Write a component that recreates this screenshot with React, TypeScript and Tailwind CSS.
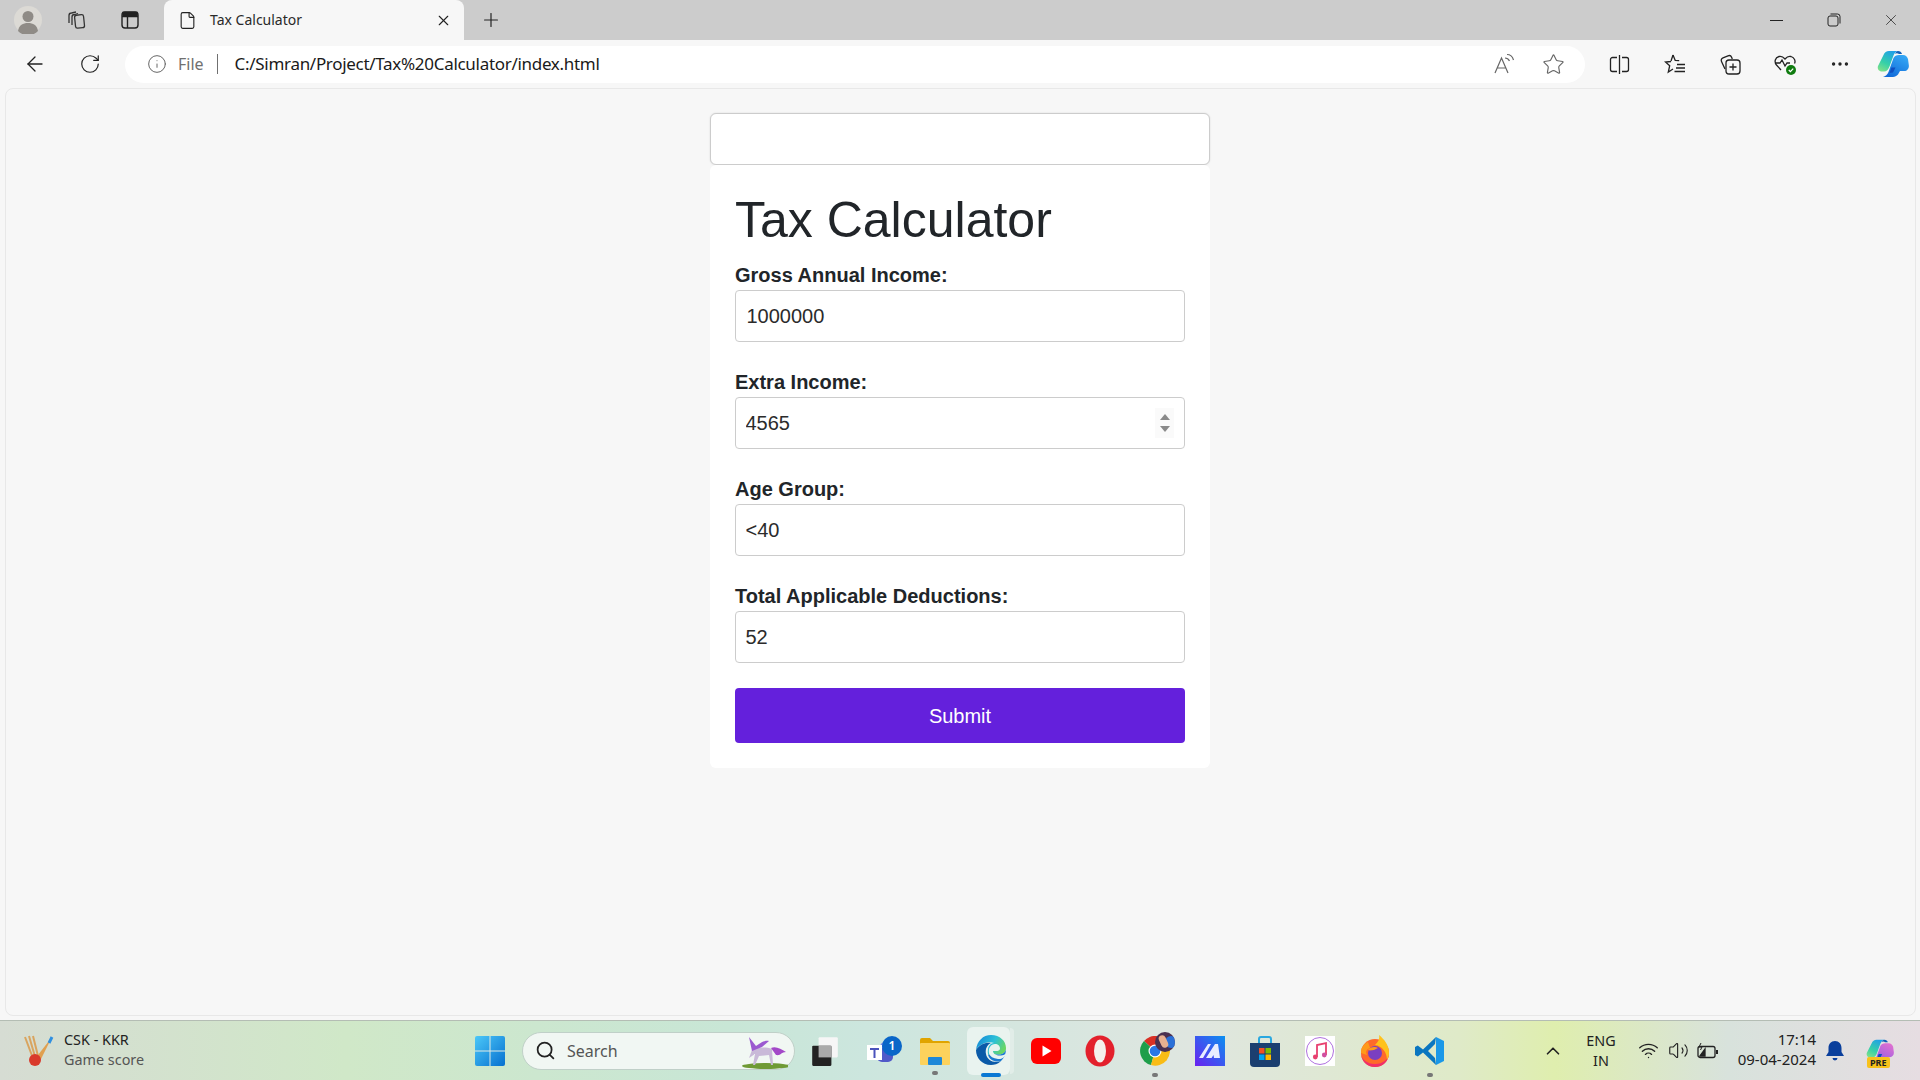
import React from 'react';
import { ArrowLeft, ChevronUp, File, Info, MoreHorizontal, Plus, RotateCw, Search, Star, Volume2, Wifi, X } from 'lucide-react';

const fields = [
  { label: 'Gross Annual Income:', value: '1000000', inset: 'px-[10.500px]' },
  { label: 'Extra Income:', value: '4565', inset: 'px-[9.500px]', spinner: true },
  { label: 'Age Group:', value: '<40', inset: 'px-[9.500px]' },
  { label: 'Total Applicable Deductions:', value: '52', inset: 'px-[9.500px]' },
];

const Slot = ({ w, children, className = '' }: { w: string; children?: React.ReactNode; className?: string }) => (
  <div className={`flex shrink-0 items-center justify-center ${w} ${className}`}>{children}</div>
);

const CopilotMark = ({ id, size = 32, pink = false }: { id: string; size?: number; pink?: boolean }) => (
  <svg width={size} height={size} viewBox="0 0 32 32">
    <defs>
      <linearGradient id={`${id}A`} x1="0.7" y1="0" x2="0.2" y2="1">
        <stop offset="0" stopColor="#1f9fe8" />
        <stop offset="0.6" stopColor="#35d0a8" />
        <stop offset="1" stopColor="#7fe08a" />
      </linearGradient>
      <linearGradient id={`${id}B`} x1="0.8" y1="0" x2="0.2" y2="1">
        <stop offset="0" stopColor={pink ? '#e070d0' : '#35a8f5'} />
        <stop offset="1" stopColor={pink ? '#8a5ce8' : '#1068d8'} />
      </linearGradient>
    </defs>
    <path d="M12 3h9c-2 .5-3.500 2-4.500 4.500l-4 11c-1 3-3 5-5.500 5H5c-3 0-5-2.500-4-5.500L6.500 7C7.500 4.500 9.500 3 12 3z" fill={`url(#${id}A)`} />
    <path d="M21 3c2 0 3.500 1 4 3l-3 0c-1.500-1-3-1-4 0 .5-1.500 1.500-3 3-3z" fill="#125fb8" />
    <path d="M22 7h4c2.500 0 4 1.500 5 4l.8 6c.5 3-1.500 6-4.500 6h-4.300l-2 3.500C19.500 28 18 29 16 29H6c2.500-.5 4.500-2.500 5.500-5l5-14C17.500 8 19.500 7 22 7z" fill={`url(#${id}B)`} />
    <path d="M14.500 19.500h4l-2.500 5-3.500.5z" fill="#0f4fc0" />
  </svg>
);

const Tabbar = () => (
  <div className="flex h-10 items-center bg-[#cccccc] pr-px">
    <Slot w="w-[56px]">
      <svg width="28" height="28" viewBox="0 0 28 28">
        <circle cx="14" cy="14" r="14" fill="#dcdad5" />
        <circle cx="14" cy="10.500" r="5.500" fill="#8f8b86" />
        <path d="M4 25c1-6 5-8 10-8s9 2 10 8a14 14 0 0 1-20 0z" fill="#8f8b86" />
      </svg>
    </Slot>
    <Slot w="w-10">
      <svg width="22" height="22" viewBox="0 0 22 22" fill="none" stroke="#333" strokeWidth="1.300">
        <path d="M4 14V6.500C4 5 5 4 6.500 4L11 3" />
        <path d="M7 16V8c0-1.500 1-2.500 2.500-2.500L13 4.500" />
        <rect x="10" y="6" width="9" height="13" rx="2" transform="rotate(-6 14 12)" />
      </svg>
    </Slot>
    <Slot w="w-[68px]">
      <svg width="20" height="20" viewBox="0 0 20 20" fill="none" stroke="#222" strokeWidth="1.400">
        <rect x="2" y="2" width="16" height="16" rx="3" />
        <path d="M2 6.500h16M7.500 6.500V18" />
        <path d="M3 2.500h14V6H3z" fill="#222" />
      </svg>
    </Slot>
    <div className="flex h-10 w-[300px] shrink-0 items-center rounded-t-lg bg-[#f7f7f7] pl-[14px] pr-[12px]">
      <File size={19} strokeWidth={1.400} className="text-[#222]" />
      <span className="ml-[13px] flex-1 pb-[2px] font-['Noto_Sans',sans-serif] text-[14px] text-[#2a2a2a]">Tax Calculator</span>
      <X size={17} strokeWidth={1.600} className="text-[#222]" />
    </div>
    <Slot w="w-[54px]">
      <Plus size={22} strokeWidth={1.300} className="text-[#222]" />
    </Slot>
    <div className="flex-1" />
    <Slot w="w-[57px]">
      <div className="h-px w-[13px] bg-[#222]" />
    </Slot>
    <Slot w="w-[57px]">
      <svg width="14" height="14" viewBox="0 0 14 14" fill="none" stroke="#222" strokeWidth="1">
        <rect x="1" y="3" width="10" height="10" rx="2" />
        <path d="M3.500 1h7A2.500 2.500 0 0 1 13 3.500v7" />
      </svg>
    </Slot>
    <Slot w="w-[57px]">
      <X size={18} strokeWidth={1} className="text-[#222]" />
    </Slot>
  </div>
);

const Toolbar = () => (
  <div className="flex h-12 items-center bg-[#f7f7f7] pl-[13px]">
    <Slot w="w-[44px]">
      <ArrowLeft size={24} strokeWidth={1.300} className="text-[#222]" />
    </Slot>
    <Slot w="w-[68px]">
      <RotateCw size={22} strokeWidth={1.300} className="mr-[2px] mb-[1px] text-[#222]" />
    </Slot>
    <div className="flex h-[37px] w-[1460px] shrink-0 items-center rounded-full bg-white pl-[22px] pr-[20px] font-['Noto_Sans',sans-serif]">
      <Info size={20} strokeWidth={1.200} className="text-[#666]" />
      <span className="ml-[11px] text-[16px] text-[#707070]">File</span>
      <div className="ml-[13px] h-5 w-px bg-[#707070]" />
      <span className="ml-[17px] text-[17px] tracking-[-0.3px] text-[#1a1a1a]">C:/Simran/Project/Tax%20Calculator/index.html</span>
      <div className="flex-1" />
      <svg width="24" height="22" viewBox="0 0 24 22" fill="none" stroke="#666" strokeWidth="1.200">
        <path d="M2 20 8.500 5 15 20M4.500 15h8" />
        <path d="M12 5c2 0 3.500 1 4.500 3M14 1.500c3 0 5.500 2 6.500 5.500" />
      </svg>
      <Star size={23} strokeWidth={1.200} className="ml-[25px] text-[#666]" />
    </div>
    <Slot w="w-[45px]" className="ml-[12px]">
      <svg width="21" height="21" viewBox="0 0 21 21" fill="none" stroke="#222" strokeWidth="1.300">
        <path d="M8 3.500H3.500a2 2 0 0 0-2 2v10a2 2 0 0 0 2 2H8M13 3.500h4.500a2 2 0 0 1 2 2v10a2 2 0 0 1-2 2H13M10.500 1v19" />
      </svg>
    </Slot>
    <Slot w="w-[56px]" className="ml-[5px]">
      <svg width="22" height="22" viewBox="0 0 22 22" fill="none" stroke="#222" strokeWidth="1.300">
        <path d="M9 2l2.200 5.300 4 .3M7 8.500l-5.500.5 4.200 3.700L4.300 19l4.700-3M9 2 7 8" />
        <path d="M13 11.500h8M12 15h9M10.500 18.500H21" />
      </svg>
    </Slot>
    <Slot w="w-[54px]">
      <svg width="22" height="22" viewBox="0 0 22 22" fill="none" stroke="#222" strokeWidth="1.300">
        <path d="M6 16 2.500 8.500c-.7-1.500 0-3 1.500-3.600L9 2.800c1.500-.6 3 0 3.600 1.500l.7 1.700" />
        <rect x="7" y="7" width="14" height="14" rx="3" />
        <path d="M14 10.500v7M10.500 14h7" />
      </svg>
    </Slot>
    <Slot w="w-[56px]">
      <svg width="24" height="24" viewBox="0 0 24 24" fill="none" stroke="#222" strokeWidth="1.300">
        <path d="M8 18 3.500 13C1 10 2 5.500 6 4.500c2-.5 4 .2 6 2.500 2-2.300 4-3 6-2.500 3.500 1 4.800 4.500 3.500 7" />
        <path d="M2 11h5l2-3 3 6 2-3h3" />
        <circle cx="18" cy="18" r="5" fill="#107c10" stroke="none" />
        <path d="m15.800 18 1.600 1.600 2.800-3" stroke="#fff" />
      </svg>
    </Slot>
    <Slot w="w-[54px]">
      <MoreHorizontal size={22} strokeWidth={1.700} className="text-[#222]" />
    </Slot>
    <Slot w="w-[52px]">
      <CopilotMark id="cpTool" />
    </Slot>
  </div>
);

const Content = () => (
  <div className="flex-1 bg-[#f7f7f7] pl-[5px] pr-[4px] pb-[4px]">
    <div className="flex h-full flex-col items-center rounded-lg border border-[#e8e8e8] bg-[#f7f7f7] pt-6 pr-px font-['Liberation_Sans',Arial,sans-serif] text-[#212529]">
      <div className="h-[52px] w-[500px] shrink-0 rounded-md border border-[#cccccc] bg-white shadow-[0_0_2px_rgba(0,0,0,0.12)]" />
      <form className="w-[500px] rounded-md bg-white p-[25px]">
        <h1 className="mb-[10px] text-[50px] leading-[60px] font-normal">Tax Calculator</h1>
        {fields.map((f) => (
          <div key={f.label} className="mb-[25px]">
            <label className="block text-[20px] leading-[30px] font-bold">{f.label}</label>
            <div className="relative">
              <input
                readOnly
                value={f.value}
                className={`block h-[52px] w-full rounded-[4px] border border-[#cccccc] bg-white text-[20px] text-[#2b2b2b] outline-none ${f.inset}`}
              />
              {f.spinner && (
                <div className="absolute top-[11px] right-[11px] flex h-[30px] w-[19px] flex-col items-center justify-center gap-[6px] bg-[#fafafa]">
                  <div className="h-0 w-0 border-x-[5px] border-b-[6px] border-x-transparent border-b-[#8a8a8a]" />
                  <div className="h-0 w-0 border-x-[5px] border-t-[6px] border-x-transparent border-t-[#8a8a8a]" />
                </div>
              )}
            </div>
          </div>
        ))}
        <button type="button" className="block h-[55px] w-full rounded-[4px] bg-[#6420dc] text-[20px] text-white">
          Submit
        </button>
      </form>
    </div>
  </div>
);

const Taskbar = () => (
  <div className="flex h-[60px] items-center border-t border-[#b4bdb4] bg-[linear-gradient(90deg,#d6dcd3_0%,#d0e8c8_18%,#c8e6d6_38%,#cce6de_45%,#dfe6e0_62%,#dfeac8_76%,#dfeeae_81%,#d8e2dc_90%,#e6dde2_100%)] font-['Noto_Sans',sans-serif] text-[#222]">
    <Slot w="w-[22px]" />
    <svg width="32" height="34" viewBox="0 0 32 34" className="shrink-0">
      <path d="M3 3 12 27M7 2l7 24M11 2l6 24" stroke="#d9a45f" strokeWidth="2" />
      <path d="M30 3 19 25l-4 4-3-2 4-6z" fill="#e0a050" />
      <path d="M30 3l-3 6" stroke="#2f8fe0" strokeWidth="3" />
      <circle cx="13" cy="26" r="6" fill="#d93a2b" />
    </svg>
    <div className="ml-[10px] mb-[2px] w-[160px] shrink-0 text-[14.400px] leading-[20px]">
      <div>CSK - KKR</div>
      <div className="text-[#555]">Game score</div>
    </div>
    <Slot w="w-[50px]" className="ml-[241px]">
      <svg width="30" height="30" viewBox="0 0 30 30">
        <defs>
          <linearGradient id="winA" x1="0" y1="0" x2="1" y2="1">
            <stop offset="0" stopColor="#4cc8f8" />
            <stop offset="1" stopColor="#0670d0" />
          </linearGradient>
        </defs>
        <rect width="30" height="30" rx="2" fill="url(#winA)" />
        <path d="M14.500 0h1v30h-1zM0 14.500h30v1H0z" fill="#dfe9e4" />
      </svg>
    </Slot>
    <div className="relative ml-[7px] flex h-[38px] w-[273px] shrink-0 items-center rounded-full border border-[#c0d0c8] bg-[#f1f7f3] pl-[12px]">
      <Search size={21} strokeWidth={2} className="text-[#222]" />
      <span className="ml-[11px] text-[16px] text-[#555]">Search</span>
      <svg width="50" height="34" viewBox="0 0 50 34" className="absolute right-[6px] bottom-[0px]">
        <ellipse cx="28" cy="31" rx="24" ry="3" fill="#6f9a35" />
        <path d="M14 15c6-3 14-3 20-1l1 16h-2l-2-10-10 1-4 9h-2l2-11-6 4z" fill="#c9b9d8" />
        <path d="M14 16 11 2l7 9c5-3 8-6 13-5l-7 6z" fill="#9b59d0" />
        <path d="M33 13c5-2 10 1 15 4-5 0-5 4-10 3z" fill="#a348c8" />
      </svg>
    </div>
    {/* pinned apps, 55px slots */}
    <Slot w="w-[55px]">
      <svg width="30" height="32" viewBox="0 0 26 30" className="ml-[4px]">
        <rect x="7" y="2" width="18" height="19" rx="1" fill="#f6f6f6" />
        <rect x="1" y="10" width="18" height="19" rx="1" fill="#222" />
        <rect x="7" y="10" width="12" height="11" fill="#aaa" />
      </svg>
    </Slot>
    <Slot w="w-[65px]" className="relative">
      <svg width="28" height="26" viewBox="0 0 28 26" className="mt-[2px] mr-[6px]">
        <circle cx="19" cy="8" r="5" fill="#7b83eb" />
        <rect x="11" y="9" width="16" height="14" rx="5" fill="#5059c9" />
        <rect x="1" y="6" width="15" height="15" fill="#fff" />
        <path d="M4 9h9v2h-3.500v8h-2v-8H4z" fill="#4b53bc" />
      </svg>
      <div className="absolute top-[-1px] right-[13px] flex h-5 w-5 items-center justify-center rounded-full bg-[#0a66c8] text-[12px] font-semibold text-white">1</div>
    </Slot>
    <Slot w="w-[39px]" className="relative">
      <svg width="30" height="28" viewBox="0 0 30 28">
        <path d="M0 3a2 2 0 0 1 2-2h8l3 3h15a2 2 0 0 1 2 2v4H0z" fill="#e0a400" />
        <rect y="6" width="30" height="22" rx="1" fill="#fcd25c" />
        <rect x="8" y="20" width="14" height="8" rx="1" fill="#1e88d8" />
      </svg>
      <div className="absolute bottom-[-10px] h-[4px] w-[6px] rounded-full bg-[#777]" />
    </Slot>
    <Slot w="w-[73px]" className="relative h-[48px]">
      <div className="absolute inset-y-0 left-[13px] w-[43px] rounded-md bg-white/50" />
      <div className="absolute inset-y-[1px] left-[56px] w-[4px] rounded-r-md bg-white/30" />
      <svg width="30" height="32" viewBox="0 0 30 32" className="relative mb-[2px]">
        <defs>
          <linearGradient id="edgeA" x1="0" y1="0.2" x2="1" y2="0.6">
            <stop offset="0" stopColor="#1688d8" />
            <stop offset="0.55" stopColor="#2cc0d8" />
            <stop offset="1" stopColor="#6cd860" />
          </linearGradient>
        </defs>
        <path d="M15 1c9 0 15 6 15 13 0 4-3 6.500-7 6.500H12C11 13 14 9 18 9c-5-2-14 0-18 7C1 7 7 1 15 1z" fill="url(#edgeA)" />
        <path d="M0 16c4-6 10-8 15-7-4 2-6 6-5 11 1 6 8 10 15 7-3 3-7 4-10 4C6 31 0 24 0 16z" fill="#0b5aa8" />
        <path d="M12 20.500h11c4 0 7-2.500 7-6.500 0 5-1 9-5 13-5 2-12-1-13-6.500z" fill="#1a78d0" />
        <path d="M13 19c-1-5 2-9 6-9 3 0 5 2 5 4.500 0 2-2 2.500-4 2.500h-3c0 3 4 5 8 4.500 2 0 3.500-.8 5-2-1 4.500-5 6-8 5.500-5-.5-8-2.500-9-5.500z" fill="#e9f3ef" />
      </svg>
      <div className="absolute bottom-[-2px] left-[26.500px] h-[4px] w-[20px] rounded-full bg-[#0a78d4]" />
    </Slot>
    <Slot w="w-[37px]">
      <svg width="30" height="26" viewBox="0 0 30 26">
        <rect width="30" height="26" rx="6" fill="#f00" />
        <path d="M11.500 7.500v11l9-5.500z" fill="#fff" />
      </svg>
    </Slot>
    <Slot w="w-[72px]">
      <svg width="30" height="32" viewBox="0 0 30 32">
        <ellipse cx="15" cy="16" rx="14.500" ry="15.500" fill="#e3202c" />
        <ellipse cx="15" cy="16" rx="6" ry="11.500" fill="#f4f0ec" />
      </svg>
    </Slot>
    <Slot w="w-[38px]" className="relative">
      <svg width="30" height="30" viewBox="0 0 30 30">
        <path d="M15 15 4 5A14.500 14.500 0 0 1 28 8z" fill="#d93025" />
        <path d="M15 15 4 5a14.500 14.500 0 0 0 7 24z" fill="#1e9e4a" />
        <path d="M15 15 28 8a14.500 14.500 0 0 1-17 21z" fill="#f9bc15" />
        <circle cx="15" cy="15" r="6.500" fill="#fff" />
        <circle cx="15" cy="15" r="5.300" fill="#2a76e8" />
      </svg>
      <div className="absolute top-[-4px] left-[19px] h-5 w-5 overflow-hidden rounded-full bg-[#4a3050]">
        <div className="absolute top-[4px] left-[10px] h-3 w-3 rounded-full bg-[#2a70d8]" />
        <div className="absolute top-[3px] left-[5px] h-[13px] w-[7px] rotate-[-25deg] rounded-full bg-[#e8b090]" />
      </div>
      <div className="absolute bottom-[-11px] h-[4px] w-[6px] rounded-full bg-[#777]" />
    </Slot>
    <Slot w="w-[72px]">
      <svg width="30" height="30" viewBox="0 0 30 30">
        <defs>
          <linearGradient id="appA" x1="1" y1="0" x2="0" y2="1">
            <stop offset="0" stopColor="#0a90f0" />
            <stop offset="1" stopColor="#6a20f0" />
          </linearGradient>
        </defs>
        <rect width="30" height="30" fill="url(#appA)" />
        <path d="M4 22 13 8h3L8 22zM11 22 20 8h3l2 14h-6l-.5-3-2 3z" fill="#e8ecff" />
      </svg>
    </Slot>
    <Slot w="w-[38px]">
      <svg width="30" height="32" viewBox="0 0 30 32">
        <path d="M9 8V4a2 2 0 0 1 2-2h8a2 2 0 0 1 2 2v4" fill="none" stroke="#2aa8e0" strokeWidth="2" />
        <path d="M0 8h30v20a4 4 0 0 1-4 4H4a4 4 0 0 1-4-4z" fill="#1b3f70" />
        <rect x="9" y="13" width="5.500" height="5.500" fill="#f25022" />
        <rect x="15.500" y="13" width="5.500" height="5.500" fill="#7fba00" />
        <rect x="9" y="19.500" width="5.500" height="5.500" fill="#00a4ef" />
        <rect x="15.500" y="19.500" width="5.500" height="5.500" fill="#ffb900" />
      </svg>
    </Slot>
    <Slot w="w-[71px]">
      <svg width="30" height="30" viewBox="0 0 30 30">
        <rect width="30" height="30" fill="#fff" />
        <circle cx="15" cy="15" r="13.500" fill="#fff" stroke="#b070e0" strokeWidth="1" />
        <path d="M12 21V9l9-2v12" fill="none" stroke="#e84070" strokeWidth="1.800" />
        <circle cx="10.300" cy="21" r="2.400" fill="#e84070" />
        <circle cx="19.300" cy="19" r="2.400" fill="#d050a0" />
      </svg>
    </Slot>
    <Slot w="w-[39px]">
      <svg width="30" height="32" viewBox="0 0 30 32">
        <circle cx="15" cy="18" r="14" fill="#ff6a2a" />
        <path d="M1 18c0 8 6 14 14 14s14-6 14-14c0 6-6 11-14 11S1 24 1 18z" fill="#f0306a" />
        <path d="M19 0c5 4 10 10 10 18 0 3-1 5-2 7 0-8-5-14-12-15 3-3 5-6 4-10z" fill="#ffc21c" />
        <circle cx="15" cy="18" r="7" fill="#7a3fc0" />
        <path d="M8 15c2-3 7-4 10-2l-4 2c-2 0-4 1-6 0z" fill="#ff9a1a" />
        <path d="M1 18c0-6 3-9 7-11l2 6c-3 1-5 3-3 7z" fill="#ff9a1a" />
      </svg>
    </Slot>
    <Slot w="w-[71px]" className="relative">
      <svg width="30" height="30" viewBox="0 0 30 30">
        <path d="M21 1 8 13.500 2.800 9.500 0 11v8l2.800 1.500L8 16.500 21 29l-1-7-7-7 7-7z" fill="#0a76c0" />
        <path d="M21 1l8 4v20l-8 4z" fill="#1a98e8" />
      </svg>
      <div className="absolute bottom-[-11px] h-[4px] w-[6px] rounded-full bg-[#777]" />
    </Slot>
    <div className="flex-1" />
    <Slot w="w-[30px]">
      <ChevronUp size={22} strokeWidth={1.800} />
    </Slot>
    <div className="ml-[9px] mr-[1px] w-[48px] shrink-0 text-center text-[14.400px] leading-[20px]">
      <div>ENG</div>
      <div>IN</div>
    </div>
    <Slot w="w-[30px]" className="ml-[7px]">
      <Wifi size={21} strokeWidth={1.600} />
    </Slot>
    <Slot w="w-[30px]">
      <Volume2 size={21} strokeWidth={1.300} />
    </Slot>
    <Slot w="w-[30px]">
      <svg width="22" height="16" viewBox="0 0 22 16" fill="none" stroke="#222" strokeWidth="1.300">
        <rect x="1" y="3.500" width="17" height="11" rx="2" />
        <path d="M20 7v4" strokeWidth="2" />
        <path d="M3 13 8 6v7z" fill="#222" />
        <path d="M4 0 2 4h3L3.500 7" strokeWidth="1" />
      </svg>
    </Slot>
    <div className="mb-[3px] ml-[3px] w-[90px] shrink-0 text-right text-[15px] leading-[20px]">
      <div>17:14</div>
      <div>09-04-2024</div>
    </div>
    <Slot w="w-[38px]">
      <svg width="18" height="20" viewBox="0 0 18 20" fill="#0a3f9c">
        <path d="M9 0c4 0 6.500 3 6.500 7v4l2.500 4H0l2.500-4V7C2.500 3 5 0 9 0zM6.500 17h5a2.500 2.500 0 0 1-5 0z" />
      </svg>
    </Slot>
    <Slot w="w-[52px]" className="relative">
      <CopilotMark id="cpTask" size={28} pink />
      <div className="absolute bottom-[-3px] left-[13px] rounded-[2px] bg-[#f8c21c] px-[3px] text-[9px] leading-[11px] font-bold text-[#222]">PRE</div>
    </Slot>
    <div className="w-[14px] shrink-0" />
  </div>
);

export default function App() {
  return (
    <div className="flex h-[1080px] w-[1920px] flex-col overflow-hidden bg-[#f7f7f7]">
      <Tabbar />
      <Toolbar />
      <Content />
      <Taskbar />
    </div>
  );
}
